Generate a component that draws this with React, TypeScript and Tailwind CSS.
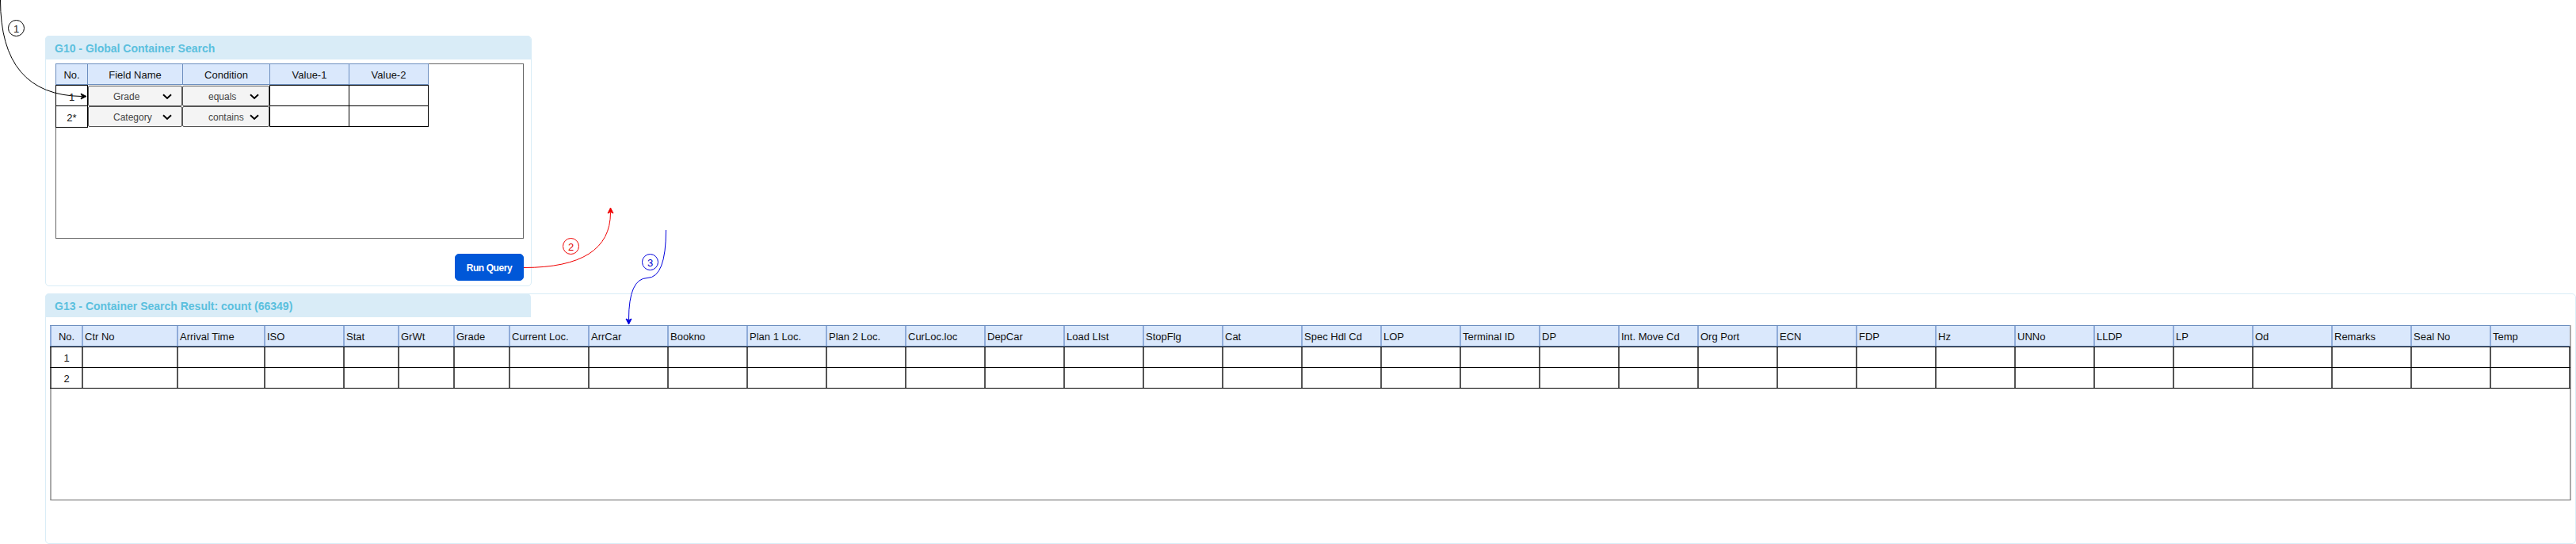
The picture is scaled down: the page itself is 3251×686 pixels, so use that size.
import React from "react";

type Column = { label: string; width: string };

const columns: Column[] = [
  { label: "Ctr No", width: "w-[120px]" },
  { label: "Arrival Time", width: "w-[110px]" },
  { label: "ISO", width: "w-[100px]" },
  { label: "Stat", width: "w-[69px]" },
  { label: "GrWt", width: "w-[70px]" },
  { label: "Grade", width: "w-[70px]" },
  ...[
    "Current Loc.", "ArrCar", "Bookno", "Plan 1 Loc.", "Plan 2 Loc.", "CurLoc.loc", "DepCar",
    "Load LIst", "StopFlg", "Cat", "Spec Hdl Cd", "LOP", "Terminal ID", "DP", "Int. Move Cd",
    "Org Port", "ECN", "FDP", "Hz", "UNNo", "LLDP", "LP", "Od", "Remarks", "Seal No", "Temp",
  ].map((label) => ({ label, width: "w-[100px]" })),
];

const searchHeads = [
  { label: "No.", width: "w-[40px]" },
  { label: "Field Name", width: "w-[120px]" },
  { label: "Condition", width: "w-[110px]" },
  { label: "Value-1", width: "w-[100px]" },
  { label: "Value-2", width: "w-[101px] border-r" },
];

const searchRows = [
  { no: "1", field: "Grade", condition: "equals", noHeight: "h-[27px]" },
  { no: "2*", field: "Category", condition: "contains", noHeight: "h-[28px]" },
];

function Chevron() {
  return (
    <svg className="mr-[12px] h-[8px] w-[12px] shrink-0" viewBox="0 0 12 8" fill="none">
      <path d="M1 1.3 6 6 11 1.3" stroke="#000" strokeWidth="2" />
    </svg>
  );
}

function SelectCell({ label, width }: { label: string; width: string }) {
  return (
    <div className={`${width} mt-px flex h-[26px] items-center justify-between rounded-[2px] border border-[#555] bg-[#f4f4f4] pt-px text-[12px] text-[#444]`}>
      <span className="leading-none">{label}</span>
      <Chevron />
    </div>
  );
}

function PanelTitle({ children }: { children: React.ReactNode }) {
  return (
    <h2 className="flex h-[30px] w-[613px] items-center rounded-t-[5px] bg-[#d9ecf7] pl-[12px] pt-[2px] text-[14px] font-bold text-[#5bc0de]">
      {children}
    </h2>
  );
}

function SearchPanel() {
  return (
    <section className="h-[316px] w-[614px] rounded-[5px] border border-[#d9edf7]">
      <div className="-ml-px -mt-px">
        <PanelTitle>G10 - Global Container Search</PanelTitle>
      </div>
      <div className="ml-[12px] mt-[5px] h-[221px] w-[591px] border border-[#666]">
        <div className="-ml-px -mt-px w-[471px]">
          <div className="flex h-[27px] border-y border-[#6c8ebf] bg-[#dae8fc]">
            {searchHeads.map((head) => (
              <div key={head.label} className={`${head.width} flex items-center justify-center border-l border-[#6c8ebf] pt-[2px] text-[13px] leading-none`}>
                {head.label}
              </div>
            ))}
          </div>
          {searchRows.map((row) => (
            <div key={row.no} className="flex h-[26px]">
              <div className={`${row.noHeight} flex w-[41px] items-center justify-center border border-black pt-[3px] text-[13px] leading-none`}>{row.no}</div>
              <SelectCell label={row.field} width="w-[119px] pl-[31px]" />
              <SelectCell label={row.condition} width="w-[110px] pl-[32px]" />
              <div className="h-[27px] w-[101px] border border-black" />
              <div className="-ml-px h-[27px] w-[101px] border border-black" />
            </div>
          ))}
        </div>
      </div>
      <button className="ml-[516px] mt-[19px] flex h-[34px] w-[87px] items-center justify-center rounded-[5px] border border-[#0057d8] bg-[#0057d8] pt-px text-[12px] font-bold tracking-[-0.4px] text-white">
        Run Query
      </button>
    </section>
  );
}

function ResultPanel() {
  return (
    <section className="mt-[9px] h-[316px] w-[3194px] rounded-[5px] border border-[#d9edf7]">
      <div className="-ml-px -mt-px">
        <PanelTitle>G13 - Container Search Result: count (66349)</PanelTitle>
      </div>
      <div className="ml-[5px] mt-[10px] h-[221px] w-[3182px] border-x-2 border-b border-x-[#aaa] border-b-[#666]">
        <div className="-ml-[2px] flex h-[27px] w-[3180px] border-y border-[#6c8ebf] bg-[#dae8fc] text-[13px] leading-none">
          <div className="flex w-[40px] items-center justify-center border-l-2 border-[#8fabd8] pt-[2px]">No.</div>
          {columns.map((column) => (
            <div key={column.label} className={`${column.width} flex shrink-0 items-center whitespace-nowrap border-l-2 border-[#8fabd8] pl-[2px] pt-[2px]`}>
              {column.label}
            </div>
          ))}
        </div>
        {["1", "2"].map((no, index) => (
          <div key={no} className={`${index === 1 ? "h-[27px] border-y" : "h-[26px] border-t"} -ml-[2px] flex w-[3181px] border-black text-[13px] leading-none`}>
            <div className="flex w-[40px] items-center justify-center border-l-2 border-[#555] pt-px">{no}</div>
            {columns.map((column) => (
              <div key={column.label} className={`${column.width} shrink-0 border-l-2 border-[#555]`} />
            ))}
            <div className="w-[2px] shrink-0 bg-[#555]" />
          </div>
        ))}
      </div>
    </section>
  );
}

function Connectors() {
  return (
    <svg className="pointer-events-none absolute left-0 top-0 h-[686px] w-[900px]" viewBox="0 0 900 686" fill="none">
      <g stroke="#000">
        <path d="M.5 0Q.5 120 103 121.5" />
        <path d="M109 121.5 102 125 103.8 121.5 102 118Z" fill="#000" />
        <circle cx="20.5" cy="35.5" r="10" />
      </g>
      <g stroke="#f00000">
        <path d="M661 337.5Q770.5 337.5 770.5 268" />
        <path d="M770.5 262 774 269 770.5 267.3 767 269Z" fill="#f00000" />
        <circle cx="720.5" cy="310.5" r="10" />
      </g>
      <g stroke="#0000dd">
        <path d="M840.5 290Q840.5 350 817 350.5Q793.5 351 793.5 403" />
        <path d="M793.5 409 790 402 793.5 403.7 797 402Z" fill="#0000dd" />
        <circle cx="820.5" cy="330.5" r="10" />
      </g>
      <g className="text-[13px]" textAnchor="middle">
        <text x="20.5" y="40.5" fill="#222">1</text>
        <text x="720.5" y="315.5" fill="#e00000">2</text>
        <text x="820.5" y="335.5" fill="#0000cc">3</text>
      </g>
    </svg>
  );
}

export default function App() {
  return (
    <main className="relative h-[686px] w-[3251px] overflow-hidden bg-white pl-[57px] pt-[45px] font-['Liberation_Sans',Arial,sans-serif] text-[#111]">
      <SearchPanel />
      <ResultPanel />
      <Connectors />
    </main>
  );
}
